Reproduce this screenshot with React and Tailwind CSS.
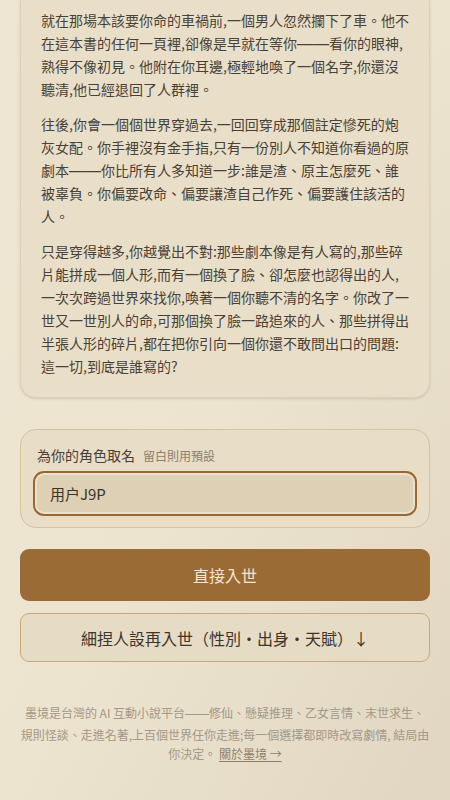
const Dash = ({ wide }) => (
  <span className={wide ? 'text-[16px]' : ''} style={{ fontFamily: '"Liberation Sans", sans-serif' }}>——</span>
);

const paragraphs = [
  ['就在那場本該要你命的車禍前,一個男人忽然攔下了車。他不在這本書的任何一頁裡,卻像是早就在等你', '看你的眼神,熟得不像初見。他附在你耳邊,極輕地喚了一個名字,你還沒聽清,他已經退回了人群裡。'],
  ['往後,你會一個個世界穿過去,一回回穿成那個註定慘死的炮灰女配。你手裡沒有金手指,只有一份別人不知道你看過的原劇本', '你比所有人多知道一步:誰是渣、原主怎麼死、誰被辜負。你偏要改命、偏要讓渣自己作死、偏要護住該活的人。'],
  ['只是穿得越多,你越覺出不對:那些劇本像是有人寫的,那些碎片能拼成一個人形,而有一個換了臉、卻怎麼也認得出的人,一次次跨過世界來找你,喚著一個你聽不清的名字。你改了一世又一世別人的命,可那個換了臉一路追來的人、那些拼得出半張人形的碎片,都在把你引向一個你還不敢問出口的問題:這一切,到底是誰寫的?'],
];

const App = () => {
  return (
    <div
      className="h-[800px] overflow-hidden bg-gradient-to-br from-[#eee5d2] via-[#ede4d0] to-[#e0d6c2] px-5"
      style={{ fontFamily: '"Noto Sans CJK TC", "Noto Sans", sans-serif' }}
    >
      {/* story card, scrolled so its top is off screen */}
      <div className="bg-[#e9dfc9] border-x border-b border-[#ddd0b6] rounded-b-2xl px-5 pt-[9px] pb-[19px] shadow-sm">
        {paragraphs.map((parts, i) => (
          <p key={i} className={`text-[14px] leading-[23px] text-[#4a4136] ${i < paragraphs.length - 1 ? 'mb-3' : ''}`}>
            {parts[0]}
            {parts[1] && <><Dash wide />{parts[1]}</>}
          </p>
        ))}
      </div>

      {/* name card */}
      <div className="mt-[31px] bg-[#e8ddc6] border border-[#d6c29f] rounded-2xl px-3 pt-[15px] pb-[11px]">
        <div className="ml-1 flex items-baseline gap-2 leading-[20px]">
          <span className="text-[14px] text-[#4a4034]">為你的角色取名</span>
          <span className="text-[12px] text-[#8c8070]">留白則用預設</span>
        </div>
        <input
          defaultValue="用户J9P"
          className="mt-[5px] w-full h-[45px] rounded-[11px] border-2 border-[#9a6733] bg-[#ddd0b5] px-[15px] text-[15px] text-[#3d3428] shadow-[inset_0_0_0_2px_#ebe1cc] outline-none"
        />
      </div>

      {/* actions */}
      <button className="mt-[21px] w-full h-[52px] rounded-[9px] bg-[#9a6b35] text-[16px] text-[#f3e6d1]">
        直接入世
      </button>
      <button className="mt-[12px] w-full h-[49px] rounded-[9px] border border-[#c8a87b] bg-[#e6dbc5] text-[16px] text-[#3d352b]">
        細捏人設再入世（性別・出身・天賦）↓
      </button>

      {/* footer */}
      <p className="mt-[41px] text-center text-[12px] leading-[19.5px] text-[#a49887]">
        墨境是台灣的 AI 互動小說平台<Dash />修仙、懸疑推理、乙女言情、末世求生、規則怪談、走進名著,上百個世界任你走進;每一個選擇都即時改寫劇情, 結局由你決定。{' '}
        <a href="#" className="underline underline-offset-2 text-[#8d7f6b]">關於墨境 →</a>
      </p>
    </div>
  );
};

export default App;
